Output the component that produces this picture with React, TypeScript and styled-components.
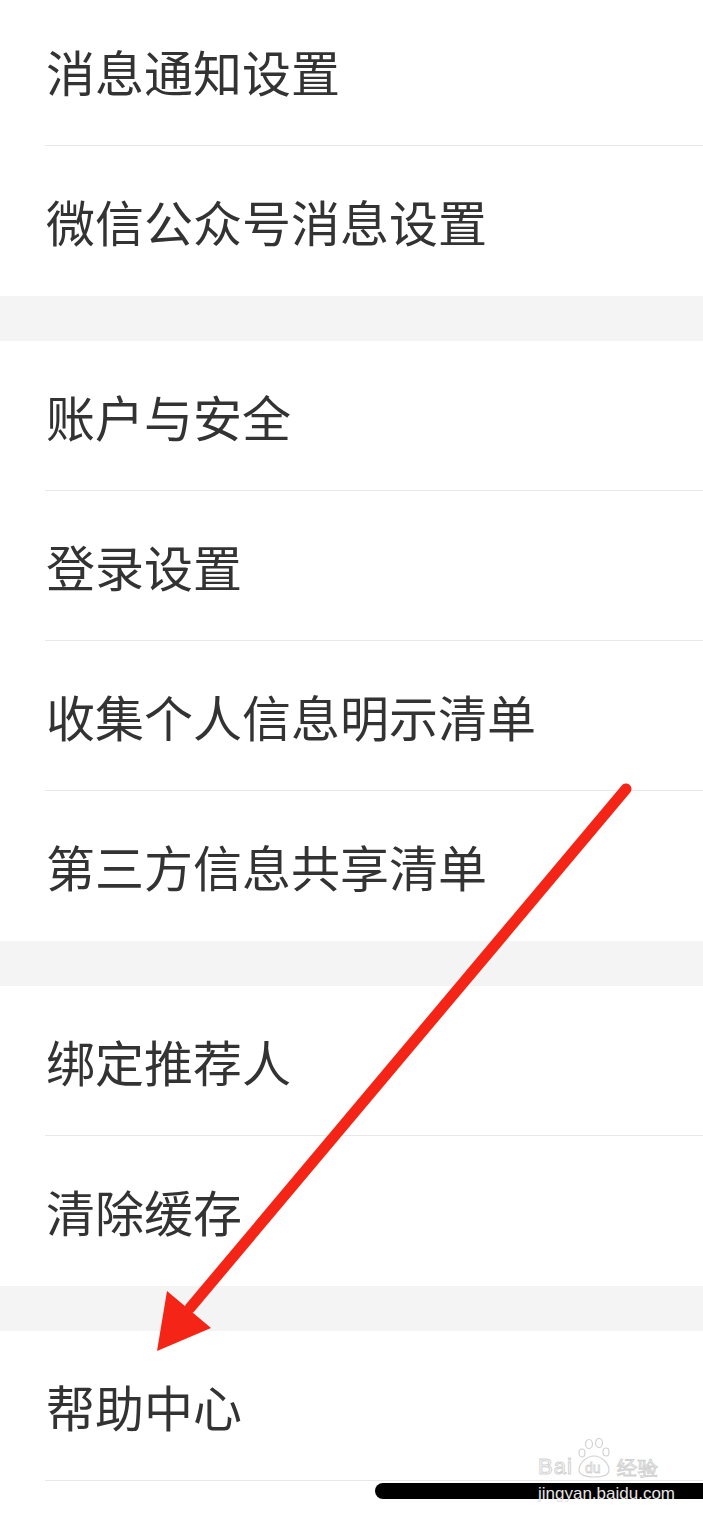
import styled, { createGlobalStyle } from "styled-components"

const Global = createGlobalStyle`
    html, body {
        margin: 0;
        padding: 0;
        background: #fff;
    }
    body {
        font-family: "Noto Sans CJK SC", "Noto Sans", sans-serif;
    }
`

const Screen = styled.div`
    position: relative;
    width: 703px;
    height: 1519px;
    overflow: hidden;
    background: #fff;
`
// page is scrolled a little, the first row is cut at the top
const List = styled.div`
    margin-top: -4px;
`
const Group = styled.section`
    background: #fff;
    & + & {
        border-top: 45px solid #f4f4f4;
    }
`
const Row = styled.div<{ $line?: boolean }>`
    height: 150px;
    box-sizing: border-box;
    margin-left: 45px;
    display: flex;
    align-items: center;
    font-size: 49px;
    color: #333;
    border-bottom: 1px solid ${p => (p.$line ? "#e8e8e8" : "transparent")};
`
const Label = styled.span`
    margin-left: 1px;
    line-height: 1;
`

const Overlay = styled.svg`
    position: absolute;
    inset: 0;
    pointer-events: none;
`

const HomeBar = styled.div`
    position: absolute;
    left: 375px;
    top: 1483px;
    width: 360px;
    height: 16px;
    border-radius: 8px;
    background: #000;
`

const Mark = styled.div`
    position: absolute;
    left: 538px;
    top: 1438px;
    display: flex;
    flex-direction: column;
    align-items: flex-start;
    font-family: "Liberation Sans", Arial, sans-serif;
`
const Logo = styled.div`
    display: flex;
    align-items: flex-end;
    gap: 1px;
    height: 40px;
`
const LogoText = styled.span<{ $size?: number }>`
    font-size: ${p => p.$size ?? 19}px;
    line-height: 1;
    color: #fff;
    -webkit-text-stroke: 1px #d2d2d2;
    letter-spacing: 1px;
`
const Url = styled.span`
    margin-top: 7px;
    font-size: 17px;
    line-height: 1;
    color: #e6e6e6;
`

const groups: string[][] = [
    ["消息通知设置", "微信公众号消息设置"],
    ["账户与安全", "登录设置", "收集个人信息明示清单", "第三方信息共享清单"],
    ["绑定推荐人", "清除缓存"],
    ["帮助中心", ""],
]

function Paw() {
    return (
        <svg width="42" height="40" viewBox="0 0 42 40" fill="none" stroke="#d2d2d2" strokeWidth="1.2">
            <ellipse cx="15" cy="6" rx="3.5" ry="4.5" />
            <ellipse cx="25" cy="5" rx="3.5" ry="4.5" />
            <ellipse cx="8" cy="15" rx="3" ry="4" />
            <ellipse cx="32" cy="14" rx="3" ry="4" />
            <path d="M5 32c0-7 8-14 15-14s15 7 15 14c0 5-7 7-15 7S5 37 5 32z" />
            <text x="11" y="35" fontSize="14" fill="#fff" stroke="#d2d2d2" strokeWidth="0.8" fontFamily="Liberation Sans, Arial, sans-serif">du</text>
        </svg>
    )
}

export default function App() {
    return (
        <Screen>
            <Global />
            <List>
                {groups.map((items, gi) => (
                    <Group key={gi}>
                        {items.map((t, i) => (
                            <Row key={i} $line={i < items.length - 1 || gi === groups.length - 1}>
                                <Label>{t}</Label>
                            </Row>
                        ))}
                    </Group>
                ))}
            </List>

            <HomeBar />

            <Mark>
                <Logo>
                    <LogoText $size={22}>Bai</LogoText>
                    <Paw />
                    <LogoText $size={20}>经验</LogoText>
                </Logo>
                <Url>jingyan.baidu.com</Url>
            </Mark>

            <Overlay width="703" height="1519" viewBox="0 0 703 1519">
                <line x1="626" y1="789" x2="190" y2="1308" stroke="#f42516" strokeWidth="11" strokeLinecap="round" />
                <polygon points="167,1291 211,1328 157,1351" fill="#f42516" />
            </Overlay>
        </Screen>
    )
}
